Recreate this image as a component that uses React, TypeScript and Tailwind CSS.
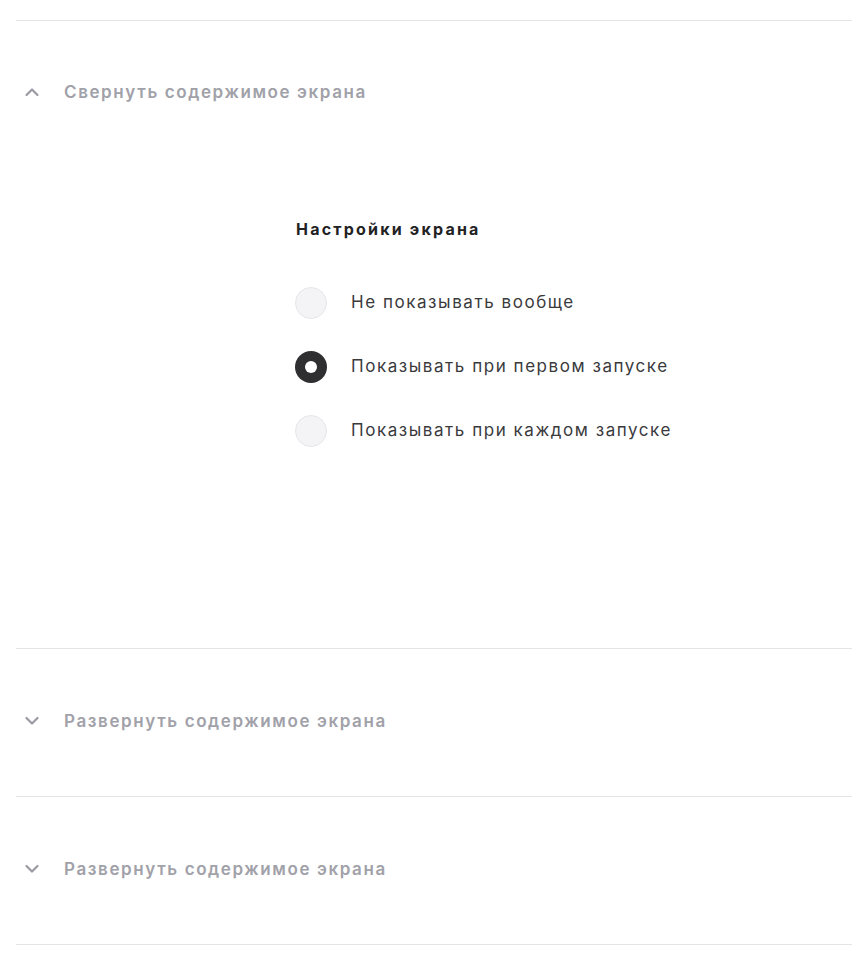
import React from 'react';

const font = { fontFamily: 'Inter, "Noto Sans", sans-serif' };

const Chevron = ({ up }: { up?: boolean }) => (
  <svg width="16" height="10" viewBox="0 0 16 10" className="shrink-0">
    <path
      d={up ? 'M2.5 8 L8 2.5 L13.5 8' : 'M2.5 2 L8 7.5 L13.5 2'}
      fill="none"
      stroke="#9a9aa3"
      strokeWidth="2.2"
      strokeLinecap="round"
      strokeLinejoin="round"
    />
  </svg>
);

const Header = ({ up, label }: { up?: boolean; label: string }) => (
  <div className="flex items-center gap-[24px] pl-[8px] h-5">
    <Chevron up={up} />
    <span className="text-[17px] font-semibold text-[#a1a1a9] tracking-[1.6px] leading-5">{label}</span>
  </div>
);

const Radio = ({ checked, label }: { checked?: boolean; label: string }) => (
  <label className="flex items-center gap-6 h-8 cursor-pointer">
    {checked ? (
      <span className="w-8 h-8 rounded-full bg-[#2f2f31] flex items-center justify-center">
        <span className="w-3 h-3 rounded-full bg-white" />
      </span>
    ) : (
      <span className="w-8 h-8 rounded-full bg-[#f4f4f6] border border-[#e6e6ea]" />
    )}
    <span className="text-[17px] text-[#3a3a3d] tracking-[1.55px]">{label}</span>
  </label>
);

const options = [
  { label: 'Не показывать вообще' },
  { label: 'Показывать при первом запуске', checked: true },
  { label: 'Показывать при каждом запуске' },
];

export default function App() {
  return (
    <div className="bg-white min-h-[968px] pt-5 pl-4" style={font}>
      <section className="border-t border-[#e5e5e8] h-[628px]">
        <div className="pt-[61px]">
          <Header up label="Свернуть содержимое экрана" />
        </div>
        <div className="pl-[279px] pt-[117px]">
          <h3 className="ml-px text-[16px] font-bold text-[#222224] tracking-[2.2px] leading-5">Настройки экрана</h3>
          <div className="flex flex-col gap-8 mt-[48px]">
            {options.map((o) => (
              <Radio key={o.label} label={o.label} checked={o.checked} />
            ))}
          </div>
        </div>
      </section>
      <section className="border-t border-[#e5e5e8] h-[148px] pt-[62px]">
        <Header label="Развернуть содержимое экрана" />
      </section>
      <section className="border-t border-b border-[#e5e5e8] h-[149px] pt-[62px]">
        <Header label="Развернуть содержимое экрана" />
      </section>
    </div>
  );
}
